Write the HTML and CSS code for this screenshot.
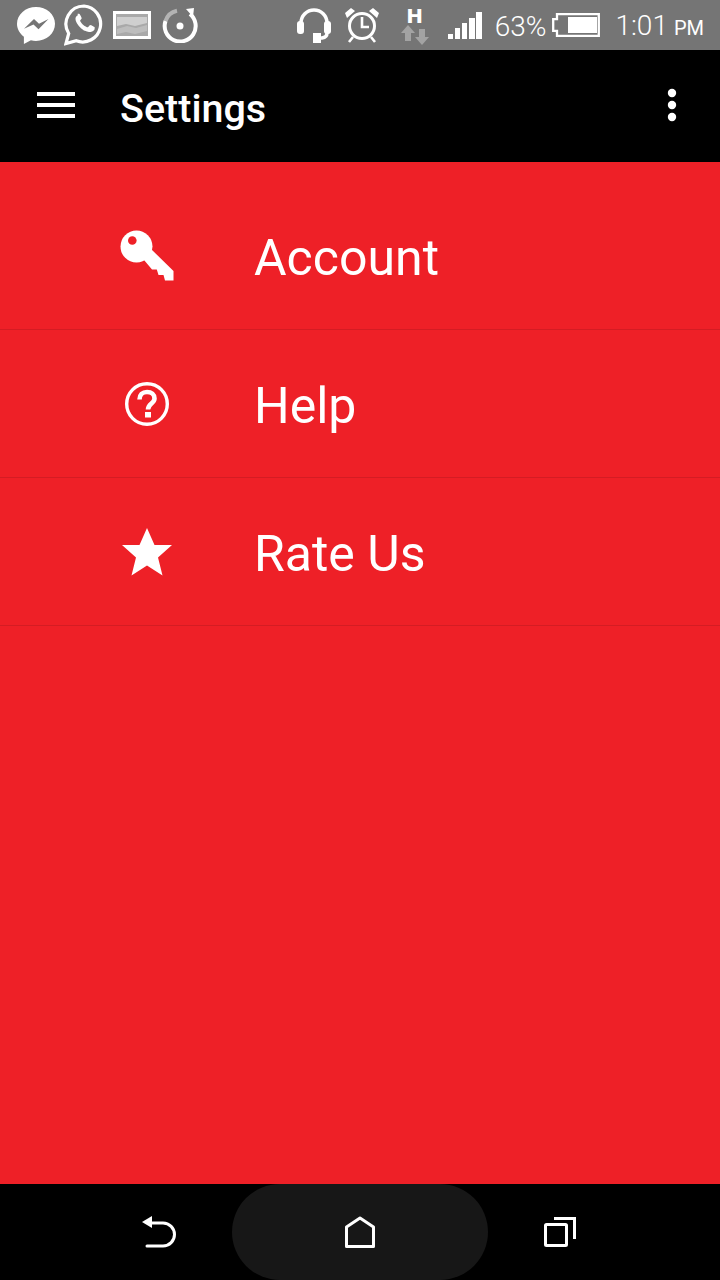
FILE: index.html
```html
<!DOCTYPE html>
<html lang="en">
<head>
<meta charset="utf-8">
<title>Settings</title>
<link rel="stylesheet" href="styles.css">
</head>
<body>
<div class="phone">
  <header class="status">
    <div class="status-left">
      <svg class="i-messenger" viewBox="0 0 38 40" preserveAspectRatio="none"><path fill="#fff" d="M19 0C8.500 0 0 7.900 0 17.700c0 5.500 2.700 10.300 6.900 13.600V39l7-3.900c1.600.4 3.300.6 5.100.6 10.500 0 19-7.900 19-18S29.500 0 19 0z"/><path fill="#757575" d="M7 23l10-10.500 5 5 9.500-5L21.500 23.500l-5-5.200z"/></svg>
      <svg class="i-whatsapp" viewBox="0 0 40 42"><path fill="none" stroke="#fff" stroke-width="3.200" d="M20 2a18 18 0 0 0-15.300 27.500L2 39.500l10.300-2.700A18 18 0 1 0 20 2z"/><path fill="#fff" d="M14 10.500c-1 0-2.800 1.500-2.800 4.300 0 3 2 5.800 2.400 6.300.4.500 4.300 6.700 10.400 9 4.900 1.900 6 .9 7 .8 1.100-.1 3.500-1.400 4-2.800.3-1.300.3-2.500.2-2.800-.3-.4-4.200-2.600-5.400-2.800-.7-.2-2.300 2.600-3 2.800-.9.100-4-1-6.500-3.500-2-1.900-3.300-4-3.300-4.800 0-.7 2.100-2.100 2-3-.2-1.200-2-4.500-2.400-5-.5-.5-1.700-.6-2.600-.5z" transform="translate(2.500 3) scale(.8)"/></svg>
      <svg class="i-image" viewBox="0 0 38 28"><rect x="1.500" y="1.500" width="35" height="25" fill="#a9a9a9" stroke="#fff" stroke-width="3"/><path fill="#cfcfcf" d="M4 6h30v6l-12 3-9-2-9 2z"/><path fill="#bdbdbd" d="M4 18l10-3 9 2 11-3v6l-12 3-9-2-9 2z"/></svg>
      <svg class="i-refresh" viewBox="0 0 36 36"><path fill="none" stroke="#fff" stroke-width="4" d="M28 7A15.500 15.500 0 1 1 3.500 14"/><path fill="none" stroke="#fff" stroke-opacity=".45" stroke-width="4" d="M3.500 14A15.500 15.500 0 0 1 15 3.800"/><path fill="#fff" d="M24 2l8-1-1 9z"/><circle cx="18" cy="19" r="3.500" fill="#fff"/></svg>
    </div>
    <div class="status-right">
      <svg class="i-headset" viewBox="0 0 34 36"><path fill="none" stroke="#fff" stroke-width="3.500" d="M4 20v-4a13 13 0 0 1 26 0v10c0 2.500-2 4.500-5 5h-5"/><rect x="0" y="14" width="7" height="13" rx="3" fill="#fff"/><rect x="27" y="14" width="7" height="13" rx="3" fill="#fff"/><rect x="16" y="26" width="8" height="10" fill="#fff"/></svg>
      <svg class="i-alarm" viewBox="0 0 36 36"><circle cx="18" cy="19" r="12.500" fill="none" stroke="#fff" stroke-width="3"/><path fill="none" stroke="#fff" stroke-width="2.600" d="M18 10v10h7M9 30l-4 5M27 30l4 5"/><path fill="#fff" d="M1 6l6-5 4 3-8 7zM35 6l-6-5-4 3 8 7z"/></svg>
      <div class="net">
        <span class="net-h">H</span>
        <svg class="i-arrows" viewBox="0 0 28 20"><path fill="#a3a3a3" d="M7 0l7 8h-4v8H4V8H0zM21 20l-7-8h4V4h6v8h4z"/></svg>
      </div>
      <svg class="i-signal" viewBox="0 0 34 27"><path fill="#fff" d="M0 22h5v5H0zM7 16h5v11H7zM14 11h5v16h-5zM21 6h6v21h-6zM28 0h6v27h-6z"/></svg>
      <span class="pct">63%</span>
      <svg class="i-battery" viewBox="0 0 48 24"><path fill="none" stroke="#fff" stroke-width="2.300" d="M5 1.200h41.800v21.600H5v-5H1.200V6.200H5z"/><rect x="16" y="4" width="29" height="16" fill="#fff"/></svg>
      <span class="clock">1:01<small class="ampm">PM</small></span>
    </div>
  </header>

  <div class="appbar">
    <svg class="i-menu" viewBox="0 0 38 26"><path fill="#fff" d="M0 0h38v4H0zM0 11h38v4H0zM0 22h38v4H0z"/></svg>
    <h1 class="title">Settings</h1>
    <svg class="i-more" viewBox="0 0 10 34"><circle cx="5" cy="5" r="4.200" fill="#fff"/><circle cx="5" cy="17" r="4.200" fill="#fff"/><circle cx="5" cy="29" r="4.200" fill="#fff"/></svg>
  </div>

  <main class="list">
    <div class="row row-first">
      <div class="icon-cell">
        <svg class="i-key" viewBox="0 0 54 54"><circle cx="16.500" cy="17.500" r="16" fill="#fff"/><path fill="#fff" d="M31 20l22.500 22v9.500H45l-1.500-5.500h-5L36.800 40.500H32L24 31z"/><circle cx="12.300" cy="11.500" r="4.300" fill="#ee2027"/></svg>
      </div>
      <span class="label">Account</span>
    </div>
    <div class="row">
      <div class="icon-cell">
        <svg class="i-help" viewBox="0 0 44 44"><circle cx="22" cy="22" r="20.300" fill="none" stroke="#fff" stroke-width="3.400"/><path fill="none" stroke="#fff" stroke-width="4.600" d="M14.500 17.500c0-4.800 3-7.500 7.500-7.500s7.500 2.500 7.500 6.500c0 5-6.500 5-6.500 11"/><rect x="20" y="30" width="6" height="5.500" fill="#fff"/></svg>
      </div>
      <span class="label">Help</span>
    </div>
    <div class="row">
      <div class="icon-cell">
        <svg class="i-star" viewBox="0 0 50 48"><path fill="#fff" d="M25 0l7.500 17H50L36 29.500l4.500 18-15.500-10-15.500 10 4.500-18L0 17h17.500z"/></svg>
      </div>
      <span class="label">Rate Us</span>
    </div>
  </main>

  <nav class="navbar">
    <svg class="i-back" viewBox="0 0 34 32"><path fill="none" stroke="#fff" stroke-width="3" stroke-linecap="round" d="M10 7h11a9.500 9.500 0 0 1 0 23H5"/><path fill="#fff" d="M0 6l10-6v12z"/></svg>
    <div class="home-pill">
      <svg class="i-home" viewBox="0 0 30 32"><path fill="none" stroke="#fff" stroke-width="3" stroke-linejoin="round" d="M1.500 30.500V11L15 2l13.500 9v19.500z"/></svg>
    </div>
    <svg class="i-recent" viewBox="0 0 32 30"><rect x="1.500" y="7.500" width="21" height="21" rx="1" fill="none" stroke="#fff" stroke-width="3"/><path fill="none" stroke="#fff" stroke-width="3" d="M10 1.500h20.500V22"/></svg>
  </nav>
</div>
</body>
</html>
```

FILE: styles.css
```css
* { box-sizing: border-box; }
html, body { margin: 0; padding: 0; }
body { width: 720px; height: 1280px; overflow: hidden; font-family: Roboto, "Liberation Sans", sans-serif; color: #fff; }
svg { display: block; flex: none; }

.phone { width: 720px; height: 1280px; display: flex; flex-direction: column; background: #ee2027; }

.status { height: 50px; background: #757575; display: flex; align-items: center; justify-content: space-between; flex: none; padding: 0 16px 0 17px; }
.status-left, .status-right { display: flex; align-items: center; }
.i-messenger { width: 38px; height: 38px; margin-top: 2px; }
.i-whatsapp { width: 40px; height: 42px; margin-left: 9px; }
.i-image { width: 38px; height: 28px; margin-left: 9px; }
.i-refresh { width: 36px; height: 36px; margin-left: 11px; }
.i-headset { width: 34px; height: 36px; }
.i-alarm { width: 36px; height: 36px; margin-left: 13px; }
.net { width: 28px; height: 38px; margin: 2px 0 0 21px; display: flex; flex-direction: column; align-items: center; }
.net-h { font: 700 20px/18px "DejaVu Sans", sans-serif; height: 18px; }
.i-arrows { width: 28px; height: 20px; }
.i-signal { width: 34px; height: 27px; margin-left: 19px; }
.pct { font-size: 28px; font-weight: 300; line-height: 50px; margin-left: 13px; padding-top: 3px; }
.i-battery { width: 48px; height: 24px; margin-left: 6px; }
.clock { font-size: 28px; font-weight: 300; line-height: 50px; margin-left: 15px; padding-top: 3px; }
.ampm { font-size: 20px; font-weight: 400; margin-left: 6px; }

.appbar { height: 112px; background: #000; display: flex; align-items: center; padding: 0 43px 0 37px; flex: none; }
.i-menu { width: 38px; height: 26px; margin-bottom: 2px; }
.title { font-size: 39.500px; font-weight: 500; margin: 0 0 0 45px; padding-top: 5px; flex: 1; }
.i-more { width: 10px; height: 34px; margin-bottom: 2px; }

.list { flex: 1; }
.row { height: 148px; display: flex; align-items: center; border-bottom: 1px solid #d41c23; }
.row-first { height: 168px; padding-top: 20px; }
.icon-cell { width: 254px; padding-left: 120px; flex: none; }
.label { font-size: 50px; padding-top: 5px; }
.i-key { width: 54px; height: 54px; }
.i-help { width: 44px; height: 44px; margin-left: 5px; }
.i-star { width: 50px; height: 48px; margin-left: 2px; }

.navbar { height: 96px; background: #000; display: flex; align-items: center; justify-content: center; flex: none; padding-right: 2px; }
.home-pill { width: 256px; height: 96px; border-radius: 48px; background: #171717; display: flex; align-items: center; justify-content: center; margin: 0 56px; }
.i-back { width: 34px; height: 32px; }
.i-home { width: 30px; height: 32px; }
.i-recent { width: 32px; height: 30px; }
```
